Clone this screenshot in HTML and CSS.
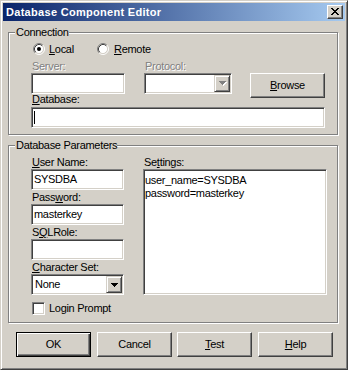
FILE: index.html
```html
<!DOCTYPE html>
<html>
<head>
<meta charset="utf-8">
<title>Database Component Editor</title>
<link rel="stylesheet" href="styles.css">
</head>
<body>
<div class="window">
  <div class="titlebar">
    <span class="title">Database Component Editor</span>
    <span class="close">
      <svg width="8" height="7" viewBox="0 0 8 7"><path d="M0 0h2v1H0zM6 0h2v1H6zM1 1h2v1H1zM5 1h2v1H5zM2 2h4v1H2zM3 3h2v1H3zM2 4h4v1H2zM1 5h2v1H1zM5 5h2v1H5zM0 6h2v1H0zM6 6h2v1H6z" fill="#000"/></svg>
    </span>
  </div>
  <div class="client">
    <div class="group g1">
      <span class="legend">Connection</span>
      <div class="radios">
        <div class="radio local">
          <svg class="rb" width="12" height="12" viewBox="0 0 12 12">
            <circle cx="6" cy="6" r="4.5" fill="#fff"/>
            <path d="M2.11 9.89A5.5 5.5 0 0 1 9.89 2.11" fill="none" stroke="#808080"/>
            <path d="M9.89 2.11A5.5 5.5 0 0 1 2.11 9.89" fill="none" stroke="#fff"/>
            <path d="M2.82 9.18A4.5 4.5 0 0 1 9.18 2.82" fill="none" stroke="#404040"/>
            <path d="M9.18 2.82A4.5 4.5 0 0 1 2.82 9.18" fill="none" stroke="#D4D0C8"/>
            <circle cx="6" cy="6" r="2" fill="#000"/>
          </svg>
          <span><u>L</u>ocal</span>
        </div>
        <div class="radio">
          <svg class="rb" width="12" height="12" viewBox="0 0 12 12">
            <circle cx="6" cy="6" r="4.5" fill="#fff"/>
            <path d="M2.11 9.89A5.5 5.5 0 0 1 9.89 2.11" fill="none" stroke="#808080"/>
            <path d="M9.89 2.11A5.5 5.5 0 0 1 2.11 9.89" fill="none" stroke="#fff"/>
            <path d="M2.82 9.18A4.5 4.5 0 0 1 9.18 2.82" fill="none" stroke="#404040"/>
            <path d="M9.18 2.82A4.5 4.5 0 0 1 2.82 9.18" fill="none" stroke="#D4D0C8"/>
          </svg>
          <span class="remote-text"><u>R</u>emote</span>
        </div>
      </div>
      <div class="conn-grid">
        <div class="lbl disabled c1">Server:</div>
        <div class="lbl disabled c3">Protocol:</div>
        <div class="edit c1"></div>
        <div class="combo c3">
          <span class="combo-btn">
            <svg width="8" height="5" viewBox="0 0 8 5"><path d="M1 1h7v1H1zM2 2h5v1H2zM3 3h3v1H3zM4 4h1v1H4z" fill="#fff"/><path d="M0 0h7v1H0zM1 1h5v1H1zM2 2h3v1H2zM3 3h1v1H3z" fill="#808080"/></svg>
          </span>
        </div>
        <div class="button browse c5"><span><u>B</u>rowse</span></div>
      </div>
      <div class="lbl db-lbl"><u>D</u>atabase:</div>
      <div class="edit db-edit"><span class="caret"></span></div>
    </div>

    <div class="group g2">
      <span class="legend">Database Parameters</span>
      <div class="params">
        <div class="left-col">
          <div class="lbl"><u>U</u>ser Name:</div>
          <div class="edit">SYSDBA</div>
          <div class="lbl">Pass<u>w</u>ord:</div>
          <div class="edit">masterkey</div>
          <div class="lbl">S<u>Q</u>LRole:</div>
          <div class="edit"></div>
          <div class="lbl"><u>C</u>haracter Set:</div>
          <div class="combo">
            <span class="value">None</span>
            <span class="combo-btn">
              <svg width="7" height="4" viewBox="0 0 7 4"><path d="M0 0h7v1H0zM1 1h5v1H1zM2 2h3v1H2zM3 3h1v1H3z" fill="#000"/></svg>
            </span>
          </div>
          <div class="check-row">
            <span class="checkbox"></span>
            <span>Login Prompt</span>
          </div>
        </div>
        <div class="right-col">
          <div class="lbl">Se<u>t</u>tings:</div>
          <div class="memo">user_name=SYSDBA<br>password=masterkey</div>
        </div>
      </div>
    </div>

    <div class="buttons">
      <div class="button default"><span>OK</span></div>
      <div class="button"><span>Cancel</span></div>
      <div class="button test"><span><u>T</u>est</span></div>
      <div class="button"><span><u>H</u>elp</span></div>
    </div>
  </div>
</div>
</body>
</html>
```

FILE: styles.css
```css
* { box-sizing: border-box; }
html, body { margin: 0; padding: 0; }
body {
  width: 348px;
  height: 370px;
  overflow: hidden;
  background: #D4D0C8;
  font-family: "Liberation Sans", Arial, sans-serif;
  font-size: 11px;
  letter-spacing: -0.3px;
  color: #000;
}
u { text-decoration: underline; text-underline-offset: 1px; }

.window {
  width: 348px;
  height: 370px;
  background: #D4D0C8;
  border: 1px solid;
  border-color: #D4D0C8 #404040 #404040 #D4D0C8;
  box-shadow: inset 1px 1px #fff, inset -1px -1px #808080;
  padding: 2px;
  display: flex;
  flex-direction: column;
}

.titlebar {
  flex: none;
  height: 18px;
  background: linear-gradient(to right, #0A246A, #A6CAF0);
  display: flex;
  align-items: center;
  justify-content: space-between;
  padding: 0 2px 0 2px;
}
.title {
  color: #fff;
  font-weight: bold;
  font-size: 11px;
  letter-spacing: 0.3px;
  line-height: 13px;
  padding-left: 1px;
}
.close {
  width: 16px;
  height: 14px;
  background: #D4D0C8;
  border: 1px solid;
  border-color: #fff #404040 #404040 #fff;
  box-shadow: inset -1px -1px #808080;
  display: flex;
  padding: 2px 0 0 3px;
}
.close svg { display: block; }

.client {
  flex: 1;
  margin-top: 1px;
  padding: 10px 0 0 5px;
  display: flex;
  flex-direction: column;
}

.group {
  position: relative;
  width: 330px;
  border: 1px solid #808080;
  box-shadow: inset 1px 1px #fff, 1px 1px #fff;
}
.legend {
  position: absolute;
  top: -7px;
  left: 6px;
  padding: 0 0 0 1px;
  background: #D4D0C8;
  line-height: 13px;
}
.g1 { height: 103px; }
.g2 { height: 178px; margin-top: 10px; }

.lbl { line-height: 13px; height: 13px; white-space: nowrap; padding-left: 1px; }
.lbl.disabled { color: #808080; text-shadow: 1px 1px #fff; }

.edit, .combo, .memo {
  background: #fff;
  border: 1px solid;
  border-color: #808080 #fff #fff #808080;
  box-shadow: inset 1px 1px #404040, inset -1px -1px #D4D0C8;
}
.edit {
  height: 21px;
  line-height: 13px;
  padding: 3px 2px 0 2px;
  white-space: nowrap;
}
.combo {
  height: 21px;
  display: flex;
  align-items: flex-start;
  padding: 1px;
  position: relative;
}
.combo .value { flex: 1; line-height: 13px; padding: 2px 0 0 2px; }
.combo-btn {
  margin-left: auto;
  width: 16px;
  height: 17px;
  background: #D4D0C8;
  border: 1px solid;
  border-color: #D4D0C8 #404040 #404040 #D4D0C8;
  box-shadow: inset 1px 1px #fff, inset -1px -1px #808080;
  display: flex;
  align-items: center;
  justify-content: center;
  padding-left: 1px;
}
.combo-btn svg { display: block; }

.radios {
  display: flex;
  margin-top: 10px;
  padding-left: 24px;
  height: 12px;
}
.radio {
  display: flex;
  align-items: center;
  gap: 4px;
  line-height: 12px;
}
.radio.local { width: 64px; }
.remote-text { margin-left: 1px; }
.rb { display: block; flex: none; }

.conn-grid {
  display: grid;
  grid-template-columns: 94px 19px 88px 18px 75px;
  grid-template-rows: 13px 21px;
  margin-top: 5px;
  padding-left: 22px;
}
.c1 { grid-column: 1; }
.c3 { grid-column: 3; }
.c5 { grid-column: 5; grid-row: 2; }
.browse { height: 24px; align-self: start; }

.db-lbl { margin-top: -1px; padding-left: 23px; }
.db-edit { margin: 1px 0 0 22px; width: 294px; padding-left: 2px; }
.caret { display: inline-block; width: 1px; height: 13px; background: #000; vertical-align: top; margin-top: 0; }

.params {
  display: flex;
  margin-top: 10px;
  padding-left: 22px;
  gap: 19px;
}
.left-col { width: 93px; display: flex; flex-direction: column; }
.left-col .edit, .left-col .combo { margin-bottom: 1px; }
.right-col { width: 184px; display: flex; flex-direction: column; }
.memo {
  height: 126px;
  line-height: 13px;
  padding: 4px 2px 0 1px;
  white-space: nowrap;
}

.check-row {
  display: flex;
  align-items: center;
  gap: 4px;
  margin-top: 6px;
  padding-left: 1px;
  line-height: 13px;
}
.checkbox {
  width: 13px;
  height: 13px;
  background: #fff;
  border: 1px solid;
  border-color: #808080 #fff #fff #808080;
  box-shadow: inset 1px 1px #404040, inset -1px -1px #D4D0C8;
}

.buttons {
  display: flex;
  gap: 6px;
  margin-top: 9px;
  padding-left: 8px;
}
.button {
  width: 75px;
  height: 25px;
  background: #D4D0C8;
  border: 1px solid;
  border-color: #fff #404040 #404040 #fff;
  box-shadow: inset -1px -1px #808080;
  display: flex;
  align-items: center;
  justify-content: center;
  line-height: 13px;
}
.button.default {
  border-color: #000;
  box-shadow: inset 1px 1px #fff, inset -1px -1px #404040, inset -2px -2px #808080;
}
.button.test { margin-left: -1px; }
```
